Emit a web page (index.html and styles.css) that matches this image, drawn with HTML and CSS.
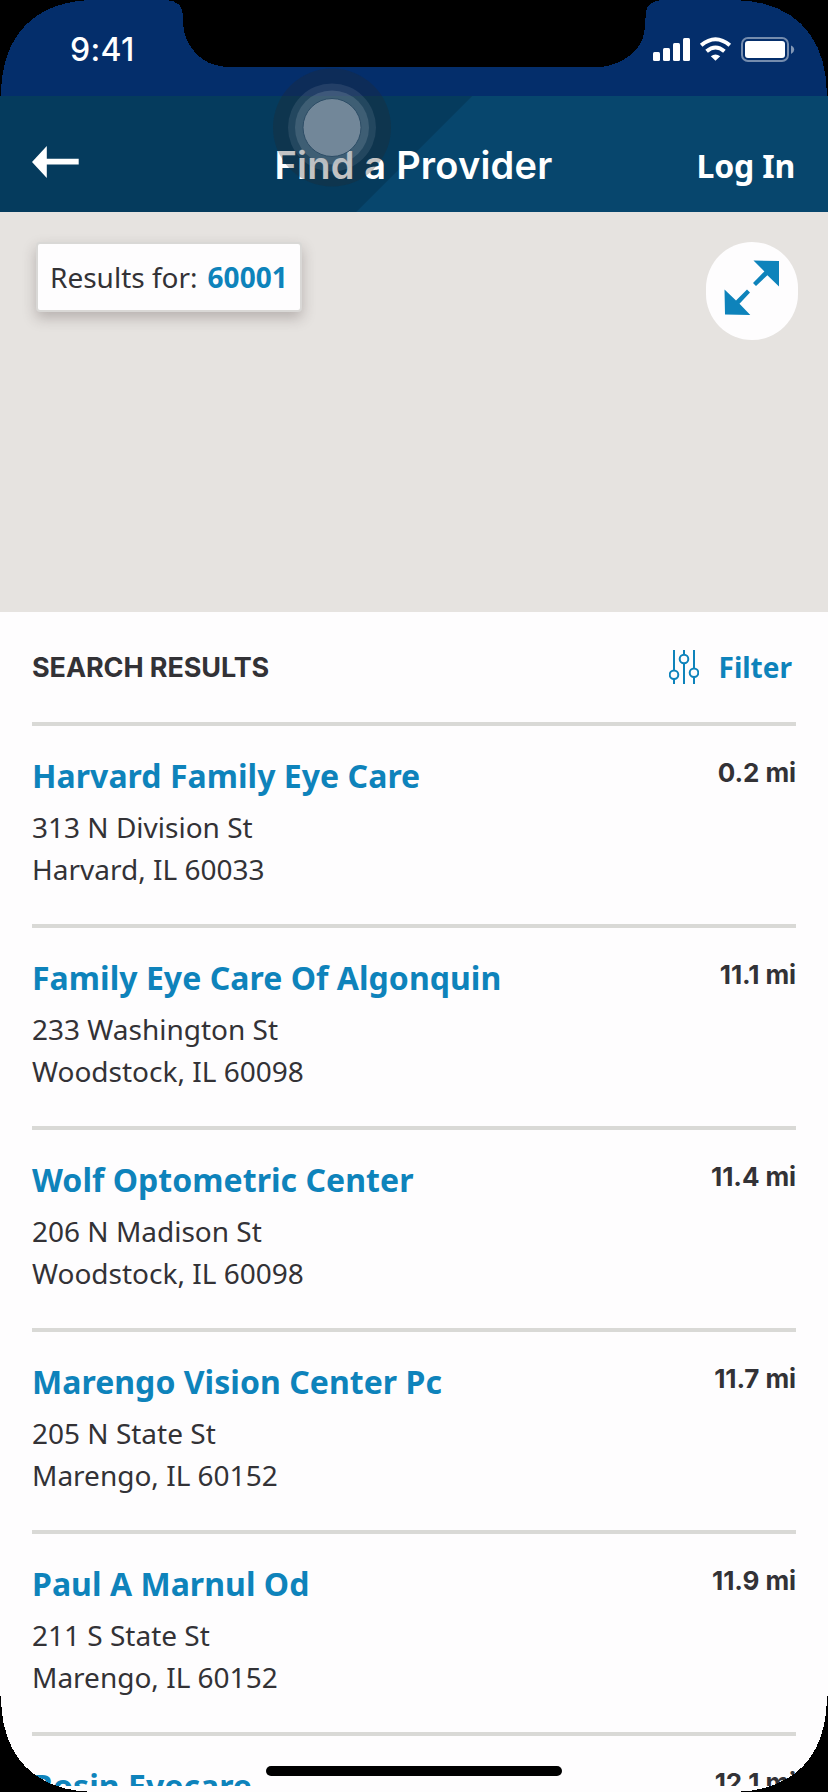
FILE: index.html
```html
<!DOCTYPE html>
<html lang="en">
<head>
<meta charset="utf-8">
<title>Find a Provider</title>
<link rel="stylesheet" href="styles.css">
</head>
<body>
<div class="screen">
  <div class="status">
    <span class="time">9:41</span>
    <svg class="status-icons" width="142" height="26" viewBox="0 0 142 26">
      <g fill="#fff">
        <rect x="0" y="15" width="7" height="9" rx="1.5"/>
        <rect x="10" y="11" width="7" height="13" rx="1.5"/>
        <rect x="20" y="6" width="7" height="18" rx="1.5"/>
        <rect x="30" y="1" width="7" height="23" rx="1.5"/>
        <path d="M62.500 23.800L57.800 19.300Q62.500 15.700 67.200 19.300Z"/>
      </g>
      <g fill="none" stroke="#fff" stroke-width="4">
        <path d="M48.200 8.300Q62.500 -3.800 76.800 8.300"/>
        <path d="M53.600 14.200Q62.500 6.800 71.400 14.200"/>
      </g>
      <rect x="89" y="1" width="46" height="23" rx="6" fill="none" stroke="#fff" stroke-opacity=".45" stroke-width="2"/>
      <rect x="92" y="4" width="40" height="17" rx="3" fill="#fff"/>
      <path d="M138 8.500Q141.200 10 141.200 12.700T138 17Z" fill="#fff" fill-opacity=".5"/>
    </svg>
  </div>
  <header class="header">
    <svg class="back" width="47" height="32" viewBox="0 0 47 32"><path d="M0 16L14.800 0V12.800H46.700V18.500H14.800V32Z" fill="#fff"/></svg>
    <h1 class="title">Find a Provider</h1>
    <a class="login">Log In</a>
  </header>
  <section class="map">
    <div class="chip"><span>Results for:</span><b class="zip">60001</b></div>
    <div class="expand">
      <svg width="56" height="56" viewBox="0 0 56 56">
        <path fill="#0e83bb" d="M29.500 0.500L55 1V26.500L43.400 15.200L32 26L29 23L40.400 11.400ZM0.500 29.500L12 40.500L23 29.500L26 32.600L15.500 43.800L26.300 55L1 54.500Z"/>
      </svg>
    </div>
  </section>
  <main class="results">
    <div class="results-head">
      <h2 class="heading">SEARCH RESULTS</h2>
      <a class="filter">
        <svg width="30" height="34" viewBox="0 0 30 34" fill="none" stroke="#0e83bb" stroke-width="2">
          <path d="M5 0V20M5 29V34M15 0V5M15 13V34M25 0V18M25 27V34"/>
          <circle cx="5" cy="24.800" r="4.300"/><circle cx="15" cy="9" r="4.300"/><circle cx="25" cy="22.800" r="4.300"/>
        </svg>
        <span>Filter</span>
      </a>
    </div>
    <ul class="list">
      <li class="item"><div><h3 class="name">Harvard Family Eye Care</h3><p class="address">313 N Division St<br>Harvard, IL 60033</p></div><span class="distance">0.2 mi</span></li>
      <li class="item"><div><h3 class="name">Family Eye Care Of Algonquin</h3><p class="address">233 Washington St<br>Woodstock, IL 60098</p></div><span class="distance">11.1 mi</span></li>
      <li class="item"><div><h3 class="name">Wolf Optometric Center</h3><p class="address">206 N Madison St<br>Woodstock, IL 60098</p></div><span class="distance">11.4 mi</span></li>
      <li class="item"><div><h3 class="name">Marengo Vision Center Pc</h3><p class="address">205 N State St<br>Marengo, IL 60152</p></div><span class="distance">11.7 mi</span></li>
      <li class="item"><div><h3 class="name">Paul A Marnul Od</h3><p class="address">211 S State St<br>Marengo, IL 60152</p></div><span class="distance">11.9 mi</span></li>
      <li class="item"><div><h3 class="name">Rosin Eyecare</h3></div><span class="distance">12.1 mi</span></li>
    </ul>
  </main>
  <div class="bottom-edge"></div>
  <svg class="overlay" width="828" height="1792" viewBox="0 0 828 1792">
    <circle cx="332" cy="127.500" r="59" fill="#282828" fill-opacity=".28"/>
    <circle cx="332" cy="127.500" r="44" fill="#a0b0c0" fill-opacity=".15"/>
    <circle cx="332" cy="127.500" r="37" fill="#a0b0c0" fill-opacity=".22"/>
    <circle cx="332" cy="127.500" r="29" fill="#728799" stroke="#2d4d66" stroke-width="1"/>
    <g shape-rendering="crispEdges">
      <path d="M0 0H96C35 0 1 35 1 96H0Z"/>
      <path d="M828 0H732C793 0 827 35 827 96H828Z"/>
      <path d="M0 1792H96C35 1792 1 1757 1 1696H0Z"/>
      <path d="M828 1792H732C793 1792 827 1757 827 1696H828Z"/>
      <path d="M166 0C178 1 183 6 183 16C183 30 184 34 188 42C196 57 208 66 228 67H602C622 64 640 52 644 34C645 28 645 22 646 12C647 5 651 1 662 0Z"/>
    </g>
    <rect x="266" y="1766" width="296" height="10" rx="5"/>
  </svg>
</div>
</body>
</html>
```
FILE: styles.css
```css
* { box-sizing: border-box; }
body, h1, h2, h3, p, ul { margin: 0; padding: 0; }
body { background: #fefdfe; font-family: "Noto Sans", sans-serif; color: #333236; }
.screen { position: relative; width: 828px; height: 1792px; overflow: hidden; background: #fefdfe; }
.status { height: 96px; background: #042e6b; display: flex; justify-content: space-between; padding: 30px 33px 0 70px; }
.time { font: 500 32px/40px Inter, sans-serif; letter-spacing: .3px; color: #fff; }
.status-icons { margin-top: 7px; }
.header { height: 116px; padding: 49px 33px 0 32px; display: grid; grid-template-columns: 1fr auto 1fr; background: linear-gradient(135deg, #053b5d 333.500px, #07466d 334.500px); color: #fff; }
.back { display: block; margin-top: 1px; }
.title { font: 600 38px/40px Inter, sans-serif; letter-spacing: .2px; }
.login { justify-self: end; margin-top: 1px; font-size: 32px; font-weight: 700; line-height: 40px; letter-spacing: -.2px; }
.map { height: 400px; background: #e6e3e0; padding: 30px 30px 0 36px; display: flex; justify-content: space-between; align-items: flex-start; }
.chip { height: 70px; width: 266px; border: 2px solid #d9d8d6; border-radius: 4px; background: #fefdfe; display: flex; align-items: center; gap: 10px; padding: 0 0 1px 12px; font-size: 28px; white-space: nowrap; box-shadow: 0 6px 14px rgba(60, 45, 45, .28); }
.zip { color: #0e83bb; }
.expand { width: 92px; height: 98px; border-radius: 46px; background: #fefdfe; padding: 18px 0 0 18px; }
.results { padding: 0 32px; }
.results-head { height: 110px; display: flex; justify-content: space-between; align-items: center; padding-right: 4px; }
.heading { margin-top: 2px; font: 700 27px/40px Inter, sans-serif; letter-spacing: -.1px; }
.filter { display: flex; align-items: center; gap: 20px; color: #0e83bb; font-size: 28px; font-weight: 700; }
.list { list-style: none; }
.item { height: 202px; border-top: 4px solid #d9d9d6; padding: 28px 0 0; display: flex; justify-content: space-between; }
.name { font-size: 32px; line-height: 44px; font-weight: 700; letter-spacing: .04px; color: #0e83bb; }
.address { margin-top: 8px; font-size: 28px; line-height: 42px; }
.distance { font: 700 26px/38px Inter, sans-serif; letter-spacing: -.1px; }
.bottom-edge { position: absolute; left: 0; right: 0; bottom: 0; height: 6px; background: #fefdfe; }
.overlay { position: absolute; left: 0; top: 0; }
```
